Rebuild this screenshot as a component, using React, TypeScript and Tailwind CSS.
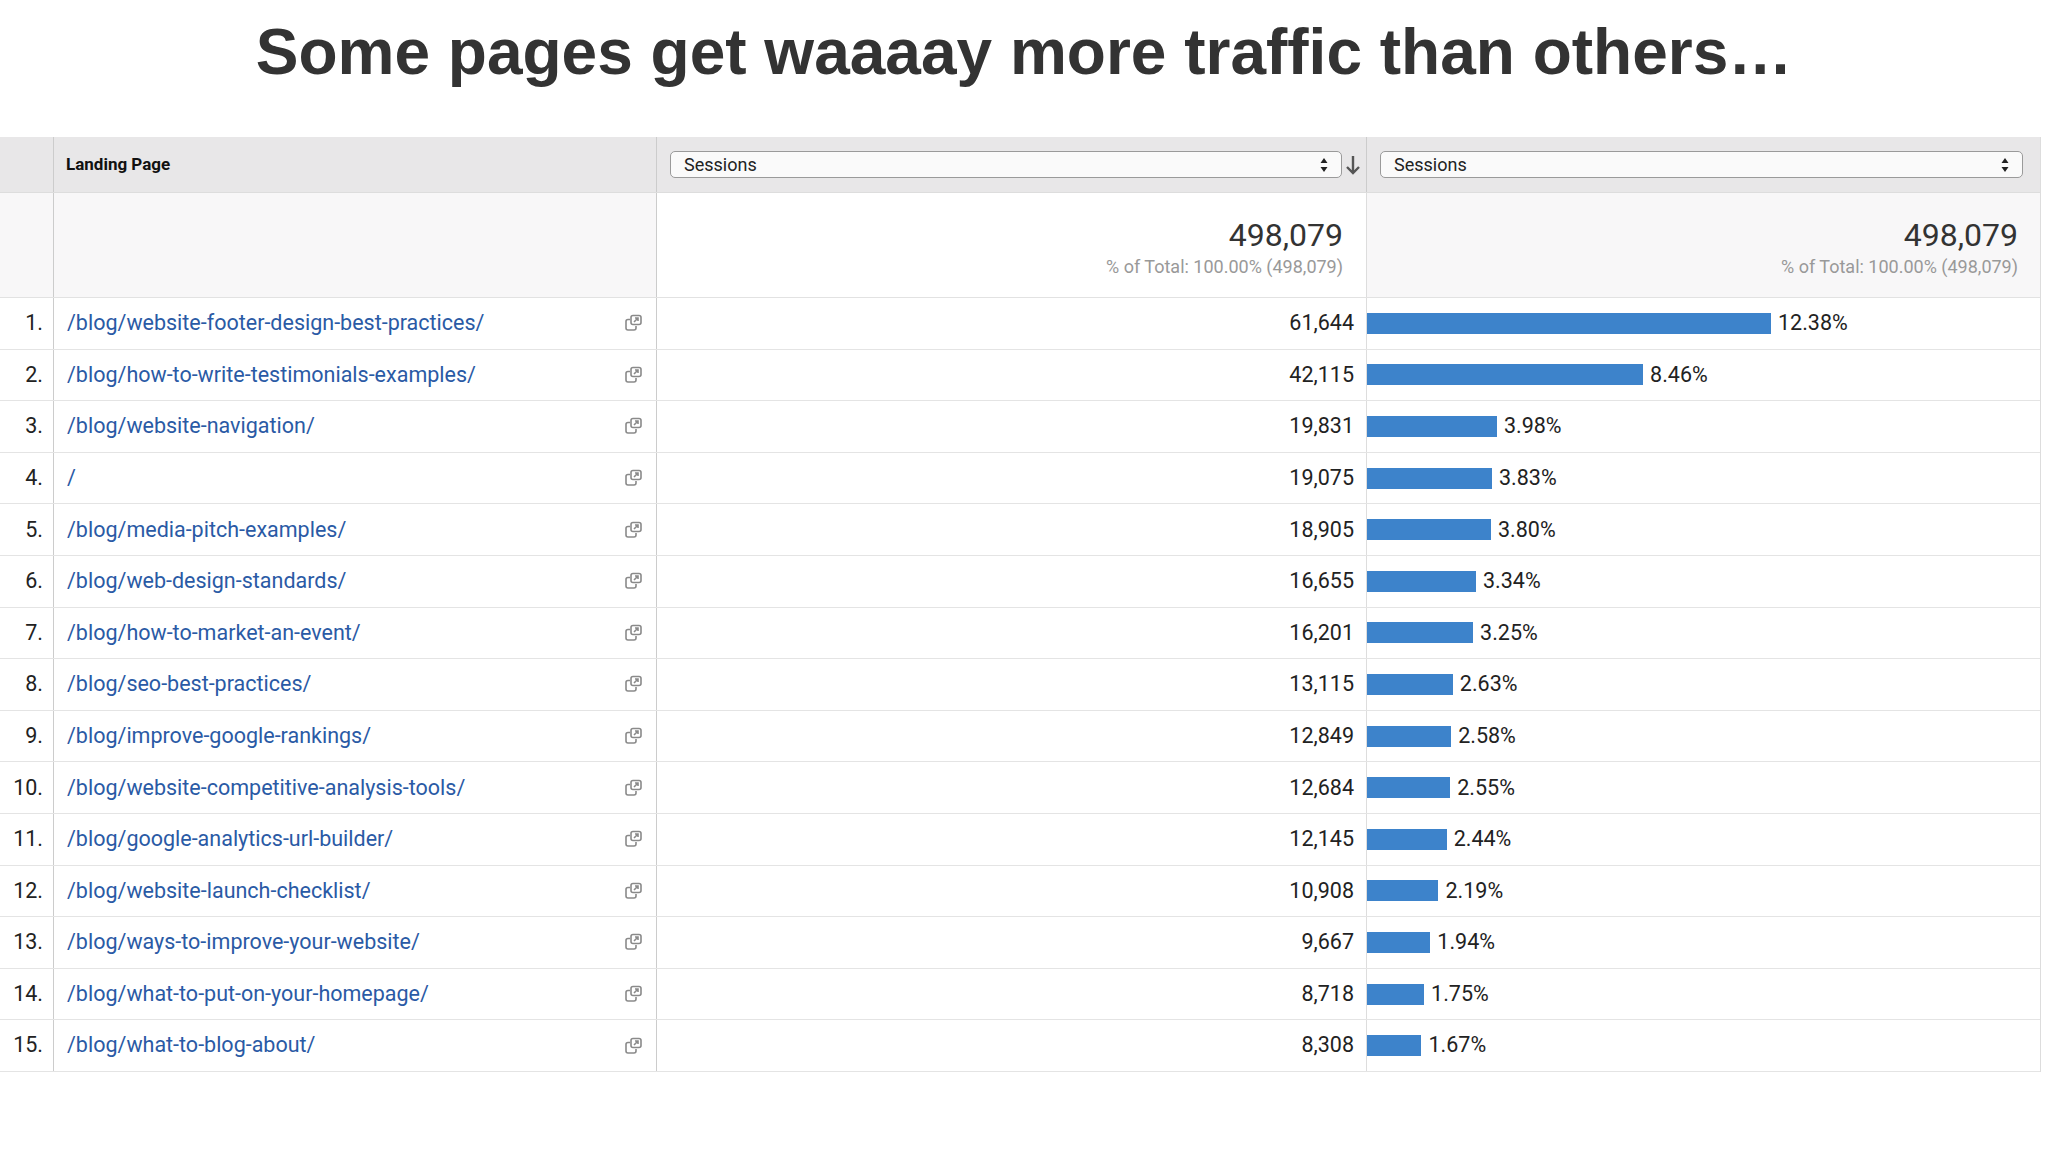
import React from "react";

const rows: [string, string, string][] = [
  ["/blog/website-footer-design-best-practices/", "61,644", "12.38"],
  ["/blog/how-to-write-testimonials-examples/", "42,115", "8.46"],
  ["/blog/website-navigation/", "19,831", "3.98"],
  ["/", "19,075", "3.83"],
  ["/blog/media-pitch-examples/", "18,905", "3.80"],
  ["/blog/web-design-standards/", "16,655", "3.34"],
  ["/blog/how-to-market-an-event/", "16,201", "3.25"],
  ["/blog/seo-best-practices/", "13,115", "2.63"],
  ["/blog/improve-google-rankings/", "12,849", "2.58"],
  ["/blog/website-competitive-analysis-tools/", "12,684", "2.55"],
  ["/blog/google-analytics-url-builder/", "12,145", "2.44"],
  ["/blog/website-launch-checklist/", "10,908", "2.19"],
  ["/blog/ways-to-improve-your-website/", "9,667", "1.94"],
  ["/blog/what-to-put-on-your-homepage/", "8,718", "1.75"],
  ["/blog/what-to-blog-about/", "8,308", "1.67"],
];

const Pop = () => (
  <svg width="20" height="18" viewBox="0 0 20 18" fill="none" stroke="#8a8a8a" strokeWidth="1.6">
    <rect x="7" y="1.5" width="10" height="9" rx="2" />
    <path d="M10 8l4-4M11 4h3v3" />
    <path d="M6 5.5H4a2 2 0 0 0-2 2V14a2 2 0 0 0 2 2h6a2 2 0 0 0 2-2v-2" />
  </svg>
);

const Sel = ({ w }: { w: string }) => (
  <div className={`${w} h-[27px] border border-[#9a9a9a] rounded-[5px] bg-[#fafafa] flex items-center justify-between px-[13px] text-[18px] text-[#222]`}>
    <span>Sessions</span>
    <svg width="8" height="16" viewBox="0 0 8 16" fill="#222"><path d="M4 1l3.5 5h-7zM4 15l3.5-5h-7z" /></svg>
  </div>
);

export default function App() {
  return (
    <div className="w-[2048px] h-[1152px] bg-white overflow-hidden" style={{ fontFamily: "Roboto, 'Liberation Sans', sans-serif" }}>
      <div className="h-[137px] flex items-start justify-center pt-[4px]">
        <h1 className="text-[64px] font-bold text-[#333]" style={{ fontFamily: "'Liberation Sans', Arial, sans-serif" }}>
          Some pages get waaaay more traffic than others…
        </h1>
      </div>
      <div className="w-[2041px] border-r border-[#ddd]">
        <div className="flex h-[56px] bg-[#e8e7e8] border-b border-[#ddd]">
          <div className="w-[54px] border-r border-[#ccc]" />
          <div className="w-[603px] border-r border-[#ccc] flex items-center pl-[12px] text-[17px] font-bold text-[#111]">Landing Page</div>
          <div className="w-[710px] border-r border-[#ccc] flex items-center pl-[13px] gap-[2px]">
            <Sel w="w-[672px]" />
            <svg width="18" height="22" viewBox="0 0 18 22" fill="none" stroke="#555" strokeWidth="2.4"><path d="M9 2v17M3 13l6 6 6-6" /></svg>
          </div>
          <div className="flex-1 flex items-center pl-[13px]"><Sel w="w-[643px]" /></div>
        </div>
        <div className="flex h-[105px] bg-[#f8f7f8] border-b border-[#e2e2e2]">
          <div className="w-[54px] border-r border-[#ccc]" />
          <div className="w-[603px] border-r border-[#ccc]" />
          <div className="w-[710px] border-r border-[#ddd] bg-white flex flex-col items-end justify-center pr-[23px] pt-[6px]">
            <div className="text-[32px] text-[#333] leading-[36px]">498,079</div>
            <div className="text-[18px] text-[#999]">% of Total: 100.00% (498,079)</div>
          </div>
          <div className="flex-1 flex flex-col items-end justify-center pr-[22px] pt-[6px]">
            <div className="text-[32px] text-[#333] leading-[36px]">498,079</div>
            <div className="text-[18px] text-[#999]">% of Total: 100.00% (498,079)</div>
          </div>
        </div>
        {rows.map(([p, s, pct], i) => (
          <div key={i} className="flex h-[51.6px] border-b border-[#e4e4e4] text-[21.5px]">
            <div className="w-[54px] border-r border-[#ccc] flex items-center justify-end pr-[10px] text-[#222]">{i + 1}.</div>
            <div className="w-[603px] border-r border-[#ccc] flex items-center justify-between pl-[13px] pr-[12px]">
              <span className="text-[#2a5aa5]">{p}</span>
              <Pop />
            </div>
            <div className="w-[710px] border-r border-[#ddd] flex items-center justify-end pr-[12px] text-[#222]">{s}</div>
            <div className="flex-1 flex items-center text-[#222]">
              <div className="h-[21px] bg-[#3d83cb]" style={{ width: `${(parseFloat(pct) / 12.38) * 404}px` }} />
              <span className="ml-[7px]">{pct}%</span>
            </div>
          </div>
        ))}
      </div>
    </div>
  );
}
